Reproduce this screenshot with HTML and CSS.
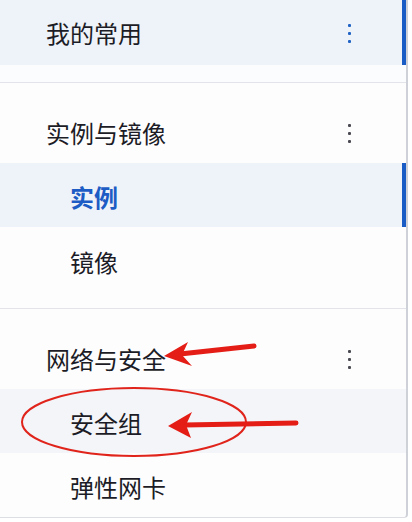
FILE: index.html
```html
<!DOCTYPE html>
<html lang="zh">
<head>
<meta charset="utf-8">
<link rel="stylesheet" href="styles.css">
</head>
<body>
<div class="page">
  <nav class="nav">
    <div class="row fav active-bar">
      <span class="label">我的常用</span>
      <span class="more blue"><i></i><i></i><i></i></span>
    </div>
    <div class="gap"></div>
    <div class="group first">
      <div class="head">
        <span class="label">实例与镜像</span>
        <span class="more"><i></i><i></i><i></i></span>
      </div>
      <div class="item selected active-bar"><span class="label">实例</span></div>
      <div class="item tail"><span class="label">镜像</span></div>
    </div>
    <div class="group">
      <div class="head">
        <span class="label">网络与安全</span>
        <span class="more"><i></i><i></i><i></i></span>
      </div>
      <div class="item hover"><span class="label">安全组</span></div>
      <div class="item"><span class="label">弹性网卡</span></div>
    </div>
  </nav>
  <svg class="marks" width="412" height="522" viewBox="0 0 412 522" xmlns="http://www.w3.org/2000/svg">
    <ellipse cx="134" cy="422" rx="112" ry="34" fill="none" stroke="#e0241b" stroke-width="2"/>
    <line x1="254" y1="346" x2="180" y2="354" stroke="#e41e16" stroke-width="5" stroke-linecap="round"/>
    <polygon points="164,356 188,342 182,355 192,366" fill="#e41e16"/>
    <line x1="296" y1="423" x2="184" y2="425" stroke="#e41e16" stroke-width="5" stroke-linecap="round"/>
    <polygon points="168,426 192,412 186,425 191,438" fill="#e41e16"/>
  </svg>
</div>
</body>
</html>
```
FILE: styles.css
```css
html, body {
  margin: 0;
  padding: 0;
  background: #ffffff;
}
.page {
  position: relative;
  width: 412px;
  height: 522px;
  overflow: hidden;
  font-family: "Noto Sans CJK SC", "Noto Sans", sans-serif;
}
.nav {
  width: 406px;
  height: 517px;
  border-right: 2px solid #cfd1d8;
  border-bottom: 1px solid #dcdee3;
  border-bottom-right-radius: 4px;
  background: #fdfdfe;
  box-sizing: content-box;
}
.label {
  font-size: 24px;
  color: #1c1c26;
  line-height: 30px;
}
.row, .head, .item {
  display: flex;
  align-items: center;
  box-sizing: border-box;
}
.fav {
  height: 65px;
  padding-left: 46px;
  padding-top: 1px;
  background: #eef2f9;
}
.active-bar {
  border-right: 4px solid #1a5cc6;
}
.gap {
  height: 17px;
  background: #fbfcfe;
}
.group {
  border-top: 1px solid #e2e4e9;
}
.head {
  height: 80px;
  padding-left: 46px;
  padding-top: 20px;
}
.item {
  height: 64px;
  padding-left: 70px;
  padding-top: 3px;
}
.item + .item {
  height: 65px;
}
.item.tail {
  height: 81px;
  padding-bottom: 14px;
}
.selected {
  background: #eef2f9;
}
.selected .label {
  color: #1c5cc4;
  font-weight: 700;
}
.hover {
  background: #f3f5f9;
}
.more {
  margin-left: auto;
  margin-right: 55px;
  display: flex;
  flex-direction: column;
  gap: 5px;
}
.active-bar .more {
  margin-right: 51px;
}
.more i {
  display: block;
  width: 3px;
  height: 3px;
  border-radius: 1px;
  background: #4a4a52;
}
.more.blue i {
  background: #2163c4;
}
.marks {
  position: absolute;
  left: 0;
  top: 0;
}
```
